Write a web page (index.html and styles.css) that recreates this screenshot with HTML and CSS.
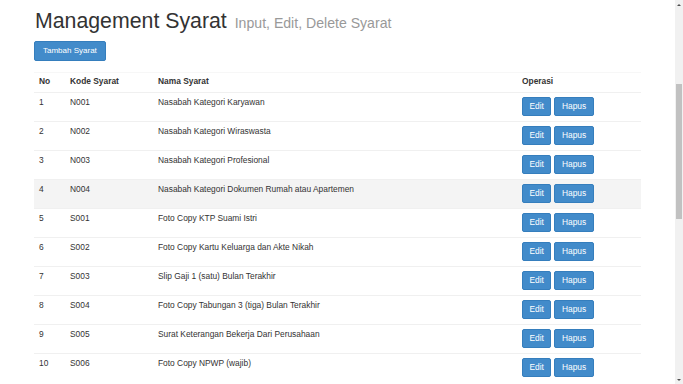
FILE: index.html
```html
<!DOCTYPE html>
<html lang="id">

<head>
    <meta charset="UTF-8">
    <meta name="viewport" content="width=device-width, initial-scale=1.0">
    <title>Management Syarat</title>
    <link rel="stylesheet" href="styles.css">
</head>

<body>
    <div class="page">
        <div class="main">
            <div class="container">
                <h1>Management Syarat <small>Input, Edit, Delete Syarat</small></h1>
                <div class="toolbar">
                    <a class="btn btn-add" href="#">Tambah Syarat</a>
                </div>

                <table class="table">
                    <thead>
                        <tr>
                            <th class="col-no">No</th>
                            <th class="col-kode">Kode Syarat</th>
                            <th class="col-nama">Nama Syarat</th>
                            <th class="col-op">Operasi</th>
                        </tr>
                    </thead>
                    <tbody>
                        <tr>
                            <td>1</td>
                            <td>N001</td>
                            <td>Nasabah Kategori Karyawan</td>
                            <td><div class="actions"><a class="btn" href="#">Edit</a><a class="btn" href="#">Hapus</a></div></td>
                        </tr>
                        <tr>
                            <td>2</td>
                            <td>N002</td>
                            <td>Nasabah Kategori Wiraswasta</td>
                            <td><div class="actions"><a class="btn" href="#">Edit</a><a class="btn" href="#">Hapus</a></div></td>
                        </tr>
                        <tr>
                            <td>3</td>
                            <td>N003</td>
                            <td>Nasabah Kategori Profesional</td>
                            <td><div class="actions"><a class="btn" href="#">Edit</a><a class="btn" href="#">Hapus</a></div></td>
                        </tr>
                        <tr class="hover">
                            <td>4</td>
                            <td>N004</td>
                            <td>Nasabah Kategori Dokumen Rumah atau Apartemen</td>
                            <td><div class="actions"><a class="btn" href="#">Edit</a><a class="btn" href="#">Hapus</a></div></td>
                        </tr>
                        <tr>
                            <td>5</td>
                            <td>S001</td>
                            <td>Foto Copy KTP Suami Istri</td>
                            <td><div class="actions"><a class="btn" href="#">Edit</a><a class="btn" href="#">Hapus</a></div></td>
                        </tr>
                        <tr>
                            <td>6</td>
                            <td>S002</td>
                            <td>Foto Copy Kartu Keluarga dan Akte Nikah</td>
                            <td><div class="actions"><a class="btn" href="#">Edit</a><a class="btn" href="#">Hapus</a></div></td>
                        </tr>
                        <tr>
                            <td>7</td>
                            <td>S003</td>
                            <td>Slip Gaji 1 (satu) Bulan Terakhir</td>
                            <td><div class="actions"><a class="btn" href="#">Edit</a><a class="btn" href="#">Hapus</a></div></td>
                        </tr>
                        <tr>
                            <td>8</td>
                            <td>S004</td>
                            <td>Foto Copy Tabungan 3 (tiga) Bulan Terakhir</td>
                            <td><div class="actions"><a class="btn" href="#">Edit</a><a class="btn" href="#">Hapus</a></div></td>
                        </tr>
                        <tr>
                            <td>9</td>
                            <td>S005</td>
                            <td>Surat Keterangan Bekerja Dari Perusahaan</td>
                            <td><div class="actions"><a class="btn" href="#">Edit</a><a class="btn" href="#">Hapus</a></div></td>
                        </tr>
                        <tr>
                            <td>10</td>
                            <td>S006</td>
                            <td>Foto Copy NPWP (wajib)</td>
                            <td><div class="actions"><a class="btn" href="#">Edit</a><a class="btn" href="#">Hapus</a></div></td>
                        </tr>
                    </tbody>
                </table>
            </div>
        </div>

        <!-- scrollbar of the framed page -->
        <div class="scrollbar">
            <div class="sb-btn"><span class="arrow-up"></span></div>
            <div class="sb-gap"></div>
            <div class="sb-thumb"></div>
            <div class="sb-rest"></div>
            <div class="sb-btn"><span class="arrow-down"></span></div>
        </div>
    </div>
</body>

</html>
```

FILE: styles.css
```css
html,
body {
    margin: 0;
    padding: 0;
    height: 100%;
    overflow: hidden;
}

body {
    font-family: "Liberation Sans", Arial, sans-serif;
    color: #333;
    background-color: #fff;
}

.page {
    display: flex;
    height: 384px;
}

.main {
    flex: 1;
    overflow: hidden;
}

.container {
    width: 607px;
    margin: 0 auto;
}

h1 {
    font-size: 21.3px;
    font-weight: normal;
    line-height: 23px;
    margin: 0;
    padding: 10px 0 0 1px;
    color: #333;
}

h1 small {
    font-size: 14.1px;
    color: #999;
    margin-left: 2px;
}

.toolbar {
    display: flex;
    margin-top: 6px;
}

.actions {
    display: flex;
    gap: 3px;
}

.btn {
    display: block;
    box-sizing: border-box;
    height: 19px;
    line-height: 17px;
    padding: 0 6.5px;
    font-size: 8.4px;
    color: #fff;
    text-decoration: none;
    background-color: #428bca;
    border: 1px solid #357ebd;
    border-radius: 2px;
}

.btn-add {
    height: 20px;
    line-height: 18px;
    padding: 0 8px;
    font-size: 8px;
}

/* tabel syarat */
.table {
    width: 100%;
    border-collapse: collapse;
    margin-top: 11px;
    font-size: 8.4px;
    line-height: 11px;
}

.table th {
    text-align: left;
    font-weight: bold;
    padding: 3px 5px 5px;
    border-top: 1px solid #f7f7f7;
    border-bottom: 1px solid #f0f0f0;
}

.table td {
    padding: 4px 5px 5px;
    vertical-align: top;
    border-top: 1px solid #f0f0f0;
}

.table td:last-child {
    white-space: nowrap;
}

.col-no {
    width: 21px;
}

.col-kode {
    width: 78px;
}

.col-nama {
    width: 354px;
}

.table tr.hover td {
    background-color: #f4f4f4;
}

.scrollbar {
    width: 8px;
    background-color: #f1f1f1;
    display: flex;
    flex-direction: column;
    align-items: center;
}

.sb-btn {
    height: 9px;
    width: 8px;
    display: flex;
    align-items: center;
    justify-content: center;
}

.arrow-up {
    width: 0;
    height: 0;
    border-left: 2px solid transparent;
    border-right: 2px solid transparent;
    border-bottom: 2px solid #505050;
}

.arrow-down {
    width: 0;
    height: 0;
    border-left: 2px solid transparent;
    border-right: 2px solid transparent;
    border-top: 2px solid #505050;
}

.sb-gap {
    height: 75px;
}

.sb-thumb {
    width: 6px;
    height: 135px;
    background-color: #c1c1c1;
}

.sb-rest {
    flex: 1;
}
```
